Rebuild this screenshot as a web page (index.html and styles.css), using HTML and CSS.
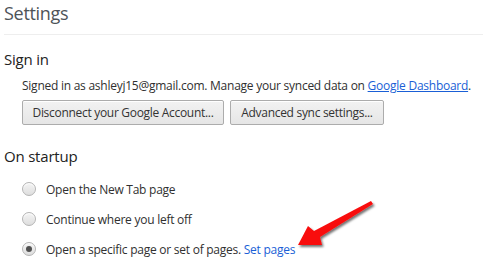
FILE: index.html
```html
<!DOCTYPE html>
<html>
<head>
<meta charset="utf-8">
<link rel="stylesheet" href="styles.css">
</head>
<body>
<div class="page">
  <header class="header"><h1 class="title">Settings</h1></header>
  <section class="section signin">
    <h3 class="section-title">Sign in</h3>
    <p class="sync-text">Signed in as ashleyj15@gmail.com. Manage your synced data on <a class="link" href="#">Google Dashboard</a>.</p>
    <div class="buttons">
      <button class="btn btn-disconnect">Disconnect your Google Account...</button>
      <button class="btn btn-advanced">Advanced sync settings...</button>
    </div>
  </section>
  <section class="section startup">
    <h3 class="section-title">On startup</h3>
    <div class="radios">
      <label class="radio-row"><span class="radio"></span><span class="radio-label">Open the New Tab page</span></label>
      <label class="radio-row"><span class="radio"></span><span class="radio-label">Continue where you left off</span></label>
      <label class="radio-row"><span class="radio checked"></span><span class="radio-label">Open a specific page or set of pages. <a class="link set-pages" href="#">Set pages</a></span></label>
    </div>
  </section>
  <svg class="arrow" width="483" height="274" viewBox="0 0 483 274">
    <defs>
      <filter id="sh" x="-20%" y="-20%" width="140%" height="140%">
        <feDropShadow dx="1.5" dy="2" stdDeviation="1.2" flood-color="#000" flood-opacity="0.55"/>
      </filter>
    </defs>
    <polygon filter="url(#sh)" fill="#f80f0f" points="298,245 308,226 314,231 371,201 373,204 320,237 322,245"/>
  </svg>
</div>
</body>
</html>
```

FILE: styles.css
```css
* { box-sizing: border-box; }
html, body { margin: 0; padding: 0; background: #fff; }
body {
  font-family: "Open Sans", "Noto Sans", sans-serif;
  color: #303030;
  width: 483px;
  height: 274px;
  overflow: hidden;
}
.page { position: relative; width: 483px; height: 274px; }
.header {
  margin-left: 4px;
  height: 35px;
  border-bottom: 1px solid #eeeeee;
  padding-top: 1px;
}
.title {
  margin: 0;
  font-size: 18px;
  line-height: 24px;
  font-weight: 400;
  color: #4e5358;
  letter-spacing: -0.3px;
}
.section { padding-left: 4px; }
.section-title {
  margin: 0;
  font-size: 15px;
  font-weight: 400;
  line-height: 20px;
  color: #222;
  letter-spacing: -0.2px;
}
.signin { padding-top: 14px; }
.sync-text {
  margin: 9px 0 0 18px;
  font-size: 12px;
  line-height: 16px;
  letter-spacing: -0.25px;
  color: #303030;
  white-space: nowrap;
}
.link { color: #1a5fd6; text-decoration: underline; }
.set-pages { text-decoration: none; }
.buttons {
  display: flex;
  gap: 6px;
  margin: 6px 0 0 18px;
  height: 25px;
}
.btn {
  font-family: inherit;
  font-size: 12px;
  letter-spacing: -0.3px;
  color: #333;
  height: 25px;
  padding: 0 4px;
  white-space: nowrap;
  border: 1px solid #acacac;
  border-radius: 2px;
  background: linear-gradient(#f2f2f2, #e6e6e6);
  box-shadow: inset 0 1px 0 #fff;
}
.btn-disconnect { width: 202px; }
.btn-advanced { width: 154px; }
.startup { padding-top: 21px; }
.radios {
  display: flex;
  flex-direction: column;
  gap: 14px;
  margin: 15px 0 0 18px;
}
.radio-row {
  display: flex;
  align-items: center;
  gap: 10px;
  height: 16px;
  font-size: 12px;
  letter-spacing: -0.25px;
  color: #303030;
  white-space: nowrap;
}
.radio {
  width: 14px;
  height: 14px;
  border-radius: 50%;
  border: 1px solid #b4b4b4;
  background: linear-gradient(#f4f4f4, #dedede);
  box-shadow: inset 0 1px 1px #fff;
  flex: none;
  position: relative;
}
.radio.checked::after {
  content: "";
  position: absolute;
  left: 3px; top: 3px;
  width: 6px; height: 6px;
  border-radius: 50%;
  background: #505050;
}
.arrow { position: absolute; left: 0; top: 0; pointer-events: none; }
```
